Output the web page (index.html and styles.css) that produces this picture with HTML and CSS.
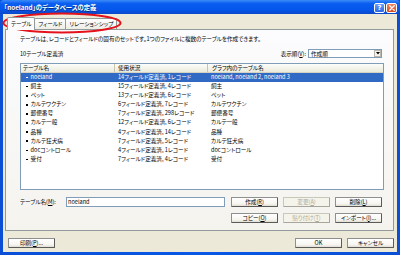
FILE: index.html
```html
<!DOCTYPE html>
<html lang="ja">
<head>
<meta charset="utf-8">
<title>「noeland」のデータベースの定義</title>
<link rel="stylesheet" href="styles.css">
</head>
<body>
<div class="window">
  <div class="titlebar">
    <span class="title">「noeland」のデータベースの定義</span>
    <div class="caption-btns">
      <span class="cbtn help">?</span>
      <span class="cbtn close"><svg width="6" height="6" viewBox="0 0 6 6"><path d="M0.8 0.8L5.2 5.2M5.2 0.8L0.8 5.2" stroke="#fff" stroke-width="1.3" stroke-linecap="round"/></svg></span>
    </div>
  </div>
  <div class="client">
    <div class="tabs">
      <span class="tab active">テーブル</span>
      <span class="tab">フィールド</span>
      <span class="tab">リレーションシップ</span>
    </div>
    <div class="panel">
      <p class="desc">テーブルは、レコードとフィールドの固有のセットです。1つのファイルに複数のテーブルを作成できます。</p>
      <div class="toolbar">
        <span>10テーブル定義済</span>
        <div class="sort">
          <span class="sort-label">表示順(<u>V</u>):</span>
          <div class="select"><span class="select-value">作成順</span><span class="arrow"><svg width="4" height="3" viewBox="0 0 4 3"><path d="M0 0H4L2 2.5Z" fill="#000"/></svg></span></div>
        </div>
      </div>
      <div class="list">
        <div class="head">
          <span class="c1">テーブル名</span><span class="c2">使用状況</span><span class="c3">グラフ内のテーブル名</span>
        </div>
        <div class="row sel"><span class="c1"><i class="dot"></i>noeland</span><span class="c2">14フィールド定義済, 1レコード</span><span class="c3">noeland, noeland 2, noeland 3</span></div>
        <div class="row"><span class="c1"><i class="dot"></i>飼主</span><span class="c2">15フィールド定義済, 4レコード</span><span class="c3">飼主</span></div>
        <div class="row"><span class="c1"><i class="dot"></i>ペット</span><span class="c2">13フィールド定義済, 6レコード</span><span class="c3">ペット</span></div>
        <div class="row"><span class="c1"><i class="dot"></i>カルテワクチン</span><span class="c2">6フィールド定義済, 7レコード</span><span class="c3">カルテワクチン</span></div>
        <div class="row"><span class="c1"><i class="dot"></i>郵便番号</span><span class="c2">7フィールド定義済, 298レコード</span><span class="c3">郵便番号</span></div>
        <div class="row"><span class="c1"><i class="dot"></i>カルテ一般</span><span class="c2">12フィールド定義済, 6レコード</span><span class="c3">カルテ一般</span></div>
        <div class="row"><span class="c1"><i class="dot"></i>品種</span><span class="c2">4フィールド定義済, 14レコード</span><span class="c3">品種</span></div>
        <div class="row"><span class="c1"><i class="dot"></i>カルテ狂犬病</span><span class="c2">7フィールド定義済, 5レコード</span><span class="c3">カルテ狂犬病</span></div>
        <div class="row"><span class="c1"><i class="dot"></i>docコントロール</span><span class="c2">4フィールド定義済, 1レコード</span><span class="c3">docコントロール</span></div>
        <div class="row"><span class="c1"><i class="dot"></i>受付</span><span class="c2">7フィールド定義済, 4レコード</span><span class="c3">受付</span></div>
      </div>
      <div class="editor">
        <span class="name-label">テーブル名(<u>M</u>):</span>
        <div class="input">noeland</div>
        <div class="btn-grid">
          <span class="btn">作成(<u>R</u>)</span>
          <span class="btn disabled">変更(<u>A</u>)</span>
          <span class="btn">削除(<u>L</u>)</span>
          <span class="btn">コピー(<u>O</u>)</span>
          <span class="btn disabled">貼り付け(<u>T</u>)</span>
          <span class="btn">インポート(<u>I</u>)...</span>
        </div>
      </div>
    </div>
    <div class="footer">
      <span class="btn print">印刷(<u>P</u>)...</span>
      <div class="footer-right">
        <span class="btn">OK</span>
        <span class="btn">キャンセル</span>
      </div>
    </div>
  </div>
  <svg class="annotation" width="122" height="22" viewBox="0 0 122 22"><ellipse cx="61" cy="11" rx="58.5" ry="9.4" fill="none" stroke="#e4131b" stroke-width="2"/></svg>
</div>
</body>
</html>
```

FILE: styles.css
```css
html, body {
  margin: 0;
  padding: 0;
}
body {
  width: 400px;
  height: 255px;
  overflow: hidden;
  font-family: "Noto Sans CJK JP", "Noto Sans", sans-serif;
  font-size: 5.6px;
  font-feature-settings: "palt";
  color: #000;
  background: #fff;
}
u { text-decoration: underline; text-underline-offset: 0.5px; }

.window {
  position: relative;
  width: 400px;
  height: 255px;
  box-sizing: border-box;
  display: flex;
  flex-direction: column;
  background: linear-gradient(90deg, #0a4fd6, #0858e6 50%, #0a4fd6);
  padding: 0 3px 3px;
}

.titlebar {
  height: 14px;
  margin: 0 -3px;
  padding: 0 3px 0 4px;
  display: flex;
  align-items: center;
  justify-content: space-between;
  background: linear-gradient(#3b8cf7, #0a5ef0 25%, #0556ea 70%, #0a48c9);
  border-radius: 4px 4px 0 0;
}
.title {
  color: #fff;
  font-weight: bold;
  font-size: 6.3px;
  text-shadow: 0.5px 0.5px 0 #0b2b86;
}
.caption-btns {
  display: flex;
  gap: 1px;
  margin-top: 1px;
}
.cbtn {
  width: 11px;
  height: 10px;
  box-sizing: border-box;
  border: 1px solid #fff;
  border-radius: 2px;
  display: flex;
  align-items: center;
  justify-content: center;
  color: #fff;
  font: bold 7px "DejaVu Sans", sans-serif;
}
.help { background: linear-gradient(#6aa0fb, #2c66e6); }
.close { background: linear-gradient(#ec8560, #d9481f); }

.client {
  flex: 1;
  background: #ece9d8;
  display: flex;
  flex-direction: column;
  padding: 0 3px 0 2px;
}

.tabs {
  display: flex;
  align-items: flex-end;
  height: 15px;
  padding-left: 2px;
}
.tab {
  height: 11px;
  line-height: 11px;
  padding: 0 3px;
  box-sizing: border-box;
  border: 1px solid #919b9c;
  border-bottom: none;
  margin-left: -1px;
  background: linear-gradient(#fefefe, #eeede5);
  border-radius: 2px 2px 0 0;
}
.tab.active {
  height: 13px;
  line-height: 12px;
  margin-left: 0;
  margin-bottom: -1px;
  position: relative;
  z-index: 1;
  background: #fcfcfe;
}

.panel {
  height: 202px;
  box-sizing: border-box;
  border: 1px solid #919b9c;
  background: linear-gradient(#fcfcfe, #f4f3ee);
  padding: 5px 9px 0 14px;
  display: flex;
  flex-direction: column;
}
.desc {
  margin: 0;
  height: 8px;
  line-height: 8px;
  white-space: nowrap;
}
.toolbar {
  margin-top: 6px;
  height: 9px;
  display: flex;
  justify-content: space-between;
  align-items: center;
}
.sort {
  display: flex;
  align-items: center;
  gap: 2px;
  margin-right: 2px;
}
.select {
  width: 74px;
  height: 9px;
  box-sizing: border-box;
  border: 1px solid #7f9db9;
  background: #fff;
  display: flex;
  align-items: center;
  justify-content: space-between;
  padding-left: 2px;
}
.arrow {
  width: 7px;
  height: 7px;
  box-sizing: border-box;
  border: 1px solid #b8b6aa;
  background: #f4f3ee;
  display: flex;
  align-items: center;
  justify-content: center;
}

.list {
  margin-top: 5px;
  height: 127px;
  box-sizing: border-box;
  border: 1px solid #7f9db9;
  background: #fff;
  display: flex;
  flex-direction: column;
}
.head, .row {
  display: flex;
  white-space: nowrap;
}
.head {
  height: 9px;
  line-height: 9px;
  background: linear-gradient(#fdfdfb, #ebeadb);
  border-bottom: 1px solid #d6d2c2;
  box-sizing: border-box;
}
.head span {
  box-sizing: border-box;
  border-right: 1px solid #c7c5b2;
}
.head .c1 { padding-left: 2px; }
.head .c2 { padding-left: 3px; }
.head .c3 { padding-left: 4px; border-right: none; }
.row {
  height: 9.1px;
  line-height: 9.1px;
}
.c1 { width: 94px; flex: none; display: flex; align-items: center; }
.c2 { width: 93px; flex: none; }
.c3 { flex: 1; }
.row .c1 { padding-left: 5px; box-sizing: border-box; }
.row .c2 { padding-left: 3px; box-sizing: border-box; }
.row .c3 { padding-left: 3px; }
.dot {
  width: 1.6px;
  height: 1.6px;
  background: #000;
  margin-right: 3px;
}
.row.sel {
  background: #316ac5;
  color: #fff;
}
.row.sel .dot { background: #fff; }

.editor {
  margin-top: 7px;
  display: flex;
  align-items: flex-start;
}
.name-label {
  width: 46px;
  height: 10px;
  line-height: 10px;
}
.input {
  width: 159px;
  height: 10px;
  box-sizing: border-box;
  border: 1px solid #7f9db9;
  background: #fff;
  line-height: 8px;
  padding-left: 1px;
}
.btn-grid {
  margin-left: 6px;
  display: grid;
  grid-template-columns: repeat(3, 47px);
  column-gap: 5px;
  row-gap: 6px;
}
.btn {
  height: 10px;
  box-sizing: border-box;
  border: 1px solid #8e8f8f;
  border-right-color: #5a5a58;
  border-bottom-color: #5a5a58;
  border-radius: 1px;
  background: linear-gradient(#ffffff, #f6f5f0 70%, #e2ded3);
  display: flex;
  align-items: center;
  justify-content: center;
  line-height: 8px;
  white-space: nowrap;
}
.btn.disabled {
  border-color: #c9c7ba;
  border-right-color: #a8a69a;
  border-bottom-color: #a8a69a;
  color: #aca899;
  background: #f5f4ea;
}

.footer {
  display: flex;
  justify-content: space-between;
  padding: 7px 0 0 3px;
}
.footer .btn { width: 47px; }
.footer-right {
  display: flex;
  gap: 5px;
}

.annotation {
  position: absolute;
  left: 1px;
  top: 12px;
}
```
